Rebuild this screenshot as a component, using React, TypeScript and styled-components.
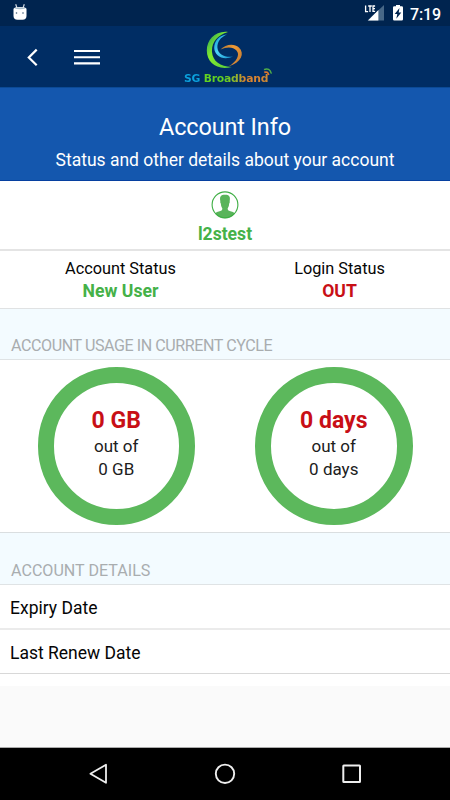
import React from "react";
import styled, { createGlobalStyle } from "styled-components";

const Global = createGlobalStyle`
  * { box-sizing: border-box; }
  body { margin: 0; background: #fafafa; font-family: Roboto, "Liberation Sans", sans-serif; color: #050505; }
`;

const Screen = styled.div`
  width: 450px;
  height: 800px;
  display: flex;
  flex-direction: column;
  overflow: hidden;
  background: #fafafa;
`;

const StatusBar = styled.div`
  flex: none;
  height: 26px;
  padding: 0 9px 0 12px;
  display: flex;
  justify-content: space-between;
  background: #00244f;
  color: #fff;
`;

const StatusIcons = styled.div`
  display: flex;
`;

const Clock = styled.span`
  width: 31px;
  margin-left: 2px;
  font-size: 16px;
  font-weight: 500;
  line-height: 29px;
  white-space: nowrap;
  letter-spacing: -0.1px;
`;

const Header = styled.header`
  flex: none;
  height: 61px;
  display: flex;
  background: #002d64;
`;

const HeaderTools = styled.div`
  width: 184px;
  padding-left: 26px;
  display: flex;
  gap: 35px;
`;

const Brand = styled.div`
  width: 90px;
  display: flex;
  flex-direction: column;
`;

const BrandMark = styled.svg`
  margin: 5px 0 0 20px;
  flex: none;
`;

const BrandLine = styled.div`
  display: flex;
  height: 15px;
`;

const BrandName = styled.span`
  font: bold 10.8px/15px "DejaVu Sans", sans-serif;
  letter-spacing: -0.22px;
  white-space: nowrap;
  color: transparent;
  background: linear-gradient(90deg, #0aa0dc 0 19%, #62d321 20% 48%, #9dae2f 64%, #d98430 72%, #d98430 88%, #c98a35);
  background-clip: text;
`;

const Signal = styled.svg`
  flex: none;
  margin: -4px 0 0 -5px;
`;

const Banner = styled.section`
  flex: none;
  height: 94px;
  padding-top: 23px;
  background: #1457ae;
  border-top: 1px solid #0b4a96;
  border-bottom: 1px solid #0640a0;
  color: #fff;
  text-align: center;
`;

const Title = styled.h1`
  margin: 0;
  font-size: 23.4px;
  font-weight: 400;
  line-height: 32px;
  letter-spacing: -0.1px;
`;

const Subtitle = styled.p`
  margin: 4px 0 0;
  font-size: 17.5px;
  line-height: 26px;
`;

const Account = styled.section`
  flex: none;
  height: 70px;
  padding-top: 10px;
  display: flex;
  flex-direction: column;
  align-items: center;
  gap: 3px;
  background: #fff;
  border-bottom: 2px solid #e4e4e4;
`;

const Value = styled.strong<{ $tone: "green" | "red" }>`
  display: block;
  font-size: 17.6px;
  font-weight: 700;
  line-height: 24px;
  color: ${(p) => (p.$tone === "green" ? "#45b148" : "#c80f16")};
`;

const Statuses = styled.section`
  flex: none;
  height: 58px;
  padding-top: 6px;
  padding-right: 1px;
  display: flex;
  gap: 4px;
  background: #fff;
  border-bottom: 1px solid #e0e2e3;
`;

const Status = styled.div`
  width: 222px;
  padding-left: 19px;
  text-align: center;
  & + & { padding-left: 5px; }
`;

const StatusLabel = styled.div`
  height: 22px;
  font-size: 16.3px;
  line-height: 23px;
`;

const SectionTitle = styled.h2<{ $height: number; $tight?: boolean }>`
  flex: none;
  height: ${(p) => p.$height}px;
  margin: 0;
  padding: 0 0 2px 11px;
  display: flex;
  align-items: flex-end;
  background: #f3fbff;
  border-bottom: 1px solid #dfe3e5;
  color: #a9adaf;
  font-size: 16.1px;
  font-weight: 400;
  line-height: 22px;
  letter-spacing: ${(p) => (p.$tight ? "-0.44px" : "0")};
`;

const Usage = styled.section`
  flex: none;
  height: 173px;
  padding: 7px 37.5px 0;
  display: flex;
  justify-content: space-between;
  background: #fff;
  border-bottom: 1px solid #dadee0;
`;

const Ring = styled.div`
  width: 157.5px;
  height: 157.5px;
  padding-top: 22.5px;
  border: 16px solid #5cb85c;
  border-radius: 50%;
  text-align: center;
  font-size: 17px;
  line-height: 23px;
  color: #202020;
`;

const RingValue = styled.div`
  height: 29px;
  font-size: 23px;
  font-weight: 700;
  line-height: 30px;
  color: #c80f16;
`;

const Row = styled.div<{ $last?: boolean }>`
  flex: none;
  height: ${(p) => (p.$last ? 44 : 45)}px;
  padding-left: 10px;
  font-size: 17.5px;
  line-height: 46px;
  background: #fff;
  border-bottom: ${(p) => (p.$last ? "1px solid #d8d8d8" : "2px solid #ebebeb")};
`;

const ListEnd = styled.div`
  flex: none;
  height: 12px;
  background: #fff;
`;

const Blank = styled.div`
  flex: 1;
`;

const NavBar = styled.nav`
  flex: none;
  height: 53px;
  padding: 14px 0 0 86px;
  display: flex;
  gap: 103px;
  background: #000;
  border-top: 1px solid #aaa;
`;

const UsageRing = ({ unit }: { unit: string }) => (
  <Ring>
    <RingValue>0 {unit}</RingValue>
    <div>out of</div>
    <div>0 {unit}</div>
  </Ring>
);

export default function App() {
  return (
    <Screen>
      <Global />
      <StatusBar>
        <svg width="16" height="26" viewBox="0 0 16 26">
          <path d="M3.7 4.3 5 8M12.3 4.3 11 8" stroke="#d3dce5" strokeWidth="1.2" />
          <path d="M1.5 9q0-2 6.5-2t6.5 2v7q0 3.7-4 3.7h-5q-4 0-4-3.7z" fill="#fff" />
          <path d="M2 8.5q6-2 12 0-6 1.3-12 0" fill="#a9bdca" />
          <circle cx="4.5" cy="13" r=".8" fill="#405b76" />
          <circle cx="11" cy="13" r=".8" fill="#405b76" />
        </svg>
        <StatusIcons>
          <svg width="44" height="26" viewBox="0 0 44 26">
            <path d="M20 5v15.5H3.5z" fill="#486887" />
            <path d="M14.4 10v10.5H4z" fill="#fff" />
            <path d="M0 4h11.5v9H0z" fill="#00244f" />
            <path d="M1.6 5.5v6.2h2.5M4.2 6h3.6M6 6v6M11.1 6H9v5.4h2.1M9 8.7h2" fill="none" stroke="#fff" strokeWidth="1.3" />
            <path d="M32 5h4v1.3h1.7q1.3 0 1.3 1.3v11.6q0 1.3-1.3 1.3h-7.4q-1.3 0-1.3-1.3V7.6q0-1.3 1.3-1.3H32z" fill="#fff" />
            <path d="M35.5 8 30.7 14h2.6l-1 4.8 5-6.2h-2.6z" fill="#00244f" />
          </svg>
          <Clock>7:19</Clock>
        </StatusIcons>
      </StatusBar>

      <Header>
        <HeaderTools>
          <svg width="13" height="61" viewBox="0 0 13 61">
            <path d="m10.7 23.6-7.9 7.9 7.9 7.8" fill="none" stroke="#fff" strokeWidth="2.2" />
          </svg>
          <svg width="26" height="61" viewBox="0 0 26 61">
            <path d="M0 25h26M0 31.3h26M0 37.4h26" stroke="#fff" strokeWidth="2.1" />
          </svg>
        </HeaderTools>
        <Brand>
          <BrandMark width="44" height="40" viewBox="0 0 44 40">
            <defs>
              <linearGradient id="leaf" x2="1" y2="1">
                <stop stopColor="#229c58" /><stop offset=".4" stopColor="#83eb2e" /><stop offset="1" stopColor="#56ca3d" />
              </linearGradient>
              <linearGradient id="wave" x2="1" y2="1">
                <stop stopColor="#0795ce" /><stop offset=".45" stopColor="#4ed3f7" /><stop offset="1" stopColor="#128fcd" />
              </linearGradient>
              <linearGradient id="swoosh" x2="1" y2=".6">
                <stop stopColor="#a8763a" /><stop offset=".5" stopColor="#f09a34" /><stop offset="1" stopColor="#c98035" />
              </linearGradient>
            </defs>
            <path d="M24 1C11.5-.4 2.8 8.4 2.8 19.6c0 12.2 10.7 20.3 25 16.3C16.5 36 8.6 30 8 21 7.4 11.5 13 4.4 24 1Z" fill="url(#leaf)" />
            <path d="M23 3.4C15 4 10 10.5 10.2 17c.4 8 8.8 13 18.8 8.6-7.6 1.2-14.8-1.6-15.6-8.8C13 11 16.5 6 23 3.4Z" fill="url(#wave)" />
            <path d="M16.5 18.6c5.2-5.6 13.8-6.2 18.4-2 6.2 6 2.6 14.9-10.6 19 8.6-5.2 12-12 8.2-16.2-3.3-3.4-9.4-4-16-.8Z" fill="url(#swoosh)" />
          </BrandMark>
          <BrandLine>
            <BrandName>SG Broadband</BrandName>
            <Signal width="10" height="10" viewBox="0 0 10 10">
              <path d="M1 2.6q5.5-2.4 7.4 4" stroke="#4fae48" strokeWidth="1.5" fill="none" />
              <path d="M1.3 5.4q3.4-1.4 4.4 2.6" stroke="#dd782e" strokeWidth="1.7" fill="none" />
            </Signal>
          </BrandLine>
        </Brand>
      </Header>

      <Banner>
        <Title>Account Info</Title>
        <Subtitle>Status and other details about your account</Subtitle>
      </Banner>

      <Account>
        <svg width="28" height="28" viewBox="0 0 28 28">
          <path d="M4 22.4q1.3-1.8 5.4-2.5 2-.4 2-2.2-1.5-2-1.6-5.2-.8-1-.5-2.6C8.5 5.4 9.8 3.7 14 3.7s5.5 1.7 4.7 6.2q.3 1.6-.5 2.6-.1 3.2-1.6 5.2 0 1.8 2 2.2 4.1.7 5.4 2.5-4 5-10 5t-10-5Z" fill="#59b45a" />
          <circle cx="14" cy="13.8" r="12.9" fill="none" stroke="#3eae44" strokeWidth="1.1" />
        </svg>
        <Value $tone="green">l2stest</Value>
      </Account>

      <Statuses>
        <Status>
          <StatusLabel>Account Status</StatusLabel>
          <Value $tone="green">New User</Value>
        </Status>
        <Status>
          <StatusLabel>Login Status</StatusLabel>
          <Value $tone="red">OUT</Value>
        </Status>
      </Statuses>

      <SectionTitle $height={51} $tight>ACCOUNT USAGE IN CURRENT CYCLE</SectionTitle>
      <Usage>
        <UsageRing unit="GB" />
        <UsageRing unit="days" />
      </Usage>
      <SectionTitle $height={52}>ACCOUNT DETAILS</SectionTitle>
      <Row>Expiry Date</Row>
      <Row $last>Last Renew Date</Row>
      <ListEnd />
      <Blank />

      <NavBar>
        <svg width="24" height="24" viewBox="0 0 24 24">
          <path d="M20 2.8v18L4.4 11.8Z" fill="none" stroke="#eee" strokeWidth="1.8" strokeLinejoin="round" />
        </svg>
        <svg width="24" height="24" viewBox="0 0 24 24">
          <circle cx="12" cy="11.8" r="9.2" fill="none" stroke="#eee" strokeWidth="1.9" />
        </svg>
        <svg width="24" height="24" viewBox="0 0 24 24">
          <rect x="3.3" y="3.4" width="16.7" height="16.7" rx=".5" fill="none" stroke="#eee" strokeWidth="2" />
        </svg>
      </NavBar>
    </Screen>
  );
}
